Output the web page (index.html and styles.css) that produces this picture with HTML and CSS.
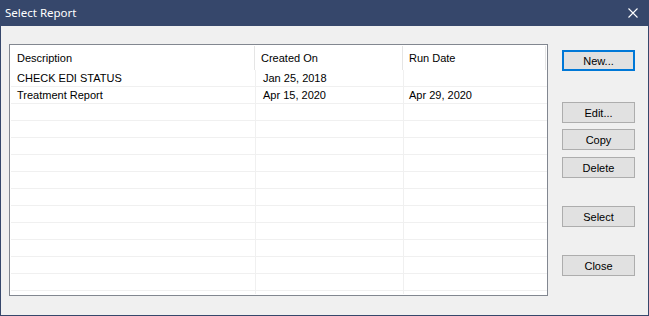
FILE: index.html
```html
<!DOCTYPE html>
<html lang="en">
<head>
  <meta charset="UTF-8" />
  <title>Select Report</title>
  <link rel="stylesheet" href="styles.css">
</head>
<body>
  <div class="window">
    <div class="titlebar">
      <span class="title">Select Report</span>
      <svg class="close-icon" width="10" height="10" viewBox="0 0 10 10">
        <path d="M0.5 0.5 L9.5 9.5 M9.5 0.5 L0.5 9.5" stroke="#fff" stroke-width="1.1" fill="none" />
      </svg>
    </div>
    <div class="content">
      <div class="list">
        <div class="list-head">
          <div class="head-cell c1">Description</div>
          <div class="head-cell c2">Created On</div>
          <div class="head-cell c3">Run Date</div>
        </div>
        <div class="row">
          <div class="cell c1">CHECK EDI STATUS</div>
          <div class="cell c2">Jan 25, 2018</div>
          <div class="cell c3"></div>
        </div>
        <div class="row">
          <div class="cell c1">Treatment Report</div>
          <div class="cell c2">Apr 15, 2020</div>
          <div class="cell c3">Apr 29, 2020</div>
        </div>
        <div class="row"><div class="cell c1"></div><div class="cell c2"></div><div class="cell c3"></div></div>
        <div class="row"><div class="cell c1"></div><div class="cell c2"></div><div class="cell c3"></div></div>
        <div class="row"><div class="cell c1"></div><div class="cell c2"></div><div class="cell c3"></div></div>
        <div class="row"><div class="cell c1"></div><div class="cell c2"></div><div class="cell c3"></div></div>
        <div class="row"><div class="cell c1"></div><div class="cell c2"></div><div class="cell c3"></div></div>
        <div class="row"><div class="cell c1"></div><div class="cell c2"></div><div class="cell c3"></div></div>
        <div class="row"><div class="cell c1"></div><div class="cell c2"></div><div class="cell c3"></div></div>
        <div class="row"><div class="cell c1"></div><div class="cell c2"></div><div class="cell c3"></div></div>
        <div class="row"><div class="cell c1"></div><div class="cell c2"></div><div class="cell c3"></div></div>
        <div class="row"><div class="cell c1"></div><div class="cell c2"></div><div class="cell c3"></div></div>
        <div class="row"><div class="cell c1"></div><div class="cell c2"></div><div class="cell c3"></div></div>
        <div class="row filler"><div class="cell c1"></div><div class="cell c2"></div><div class="cell c3"></div></div>
      </div>
      <div class="buttons">
        <button class="btn default">New...</button>
        <button class="btn gap-large">Edit...</button>
        <button class="btn gap-small">Copy</button>
        <button class="btn gap-small2">Delete</button>
        <button class="btn gap-mid">Select</button>
        <button class="btn gap-mid">Close</button>
      </div>
    </div>
  </div>
</body>
</html>
```

FILE: styles.css
```css
body {
  margin: 0;
  font-family: 'Liberation Sans', Arial, sans-serif;
  font-size: 11px;
  color: #000;
  background: #f0f0f0;
}
.window {
  width: 649px;
  height: 316px;
  box-sizing: border-box;
  border: 1px solid #36476b;
  border-top: none;
  background: #f0f0f0;
  display: flex;
  flex-direction: column;
}
.titlebar {
  height: 26px;
  flex-shrink: 0;
  background: #36476b;
  display: flex;
  align-items: center;
  justify-content: space-between;
  padding: 0 10px 0 4px;
}
.title {
  font-family: 'Noto Sans', sans-serif;
  font-size: 11.5px;
  color: #fff;
  margin-top: -1px;
}
.close-icon {
  display: block;
}
.content {
  display: flex;
  gap: 14px;
  padding: 18px 0 0 8px;
}
.list {
  width: 539px;
  height: 252px;
  box-sizing: border-box;
  border: 1px solid #828790;
  background: #fff;
  padding: 1px 0 1px 1px;
  display: flex;
  flex-direction: column;
}
.list-head {
  display: flex;
  height: 24px;
  flex-shrink: 0;
}
.head-cell {
  box-sizing: border-box;
  display: flex;
  align-items: center;
  padding-left: 6px;
  border-right: 1px solid #e5e5e5;
}
.head-cell.c1 { width: 244px; }
.head-cell.c2 { width: 148px; }
.head-cell.c3 { width: 143px; }
.row {
  display: flex;
  height: 17px;
  flex-shrink: 0;
  box-sizing: border-box;
  border-bottom: 1px solid #f0f0f0;
}
.row.filler {
  flex: 1;
  border-bottom: none;
}
.cell {
  box-sizing: border-box;
  line-height: 16px;
  padding-left: 6px;
  white-space: nowrap;
}
.cell.c1 { width: 245px; border-right: 1px solid #f0f0f0; }
.cell.c2 { width: 148px; border-right: 1px solid #f0f0f0; padding-left: 7px; }
.cell.c3 { width: 143px; padding-left: 5px; }
.buttons {
  display: flex;
  flex-direction: column;
  margin-top: 6px;
}
.btn {
  width: 73px;
  height: 21px;
  box-sizing: border-box;
  background: #e1e1e1;
  border: 1px solid #adadad;
  font-family: 'Liberation Sans', Arial, sans-serif;
  font-size: 11px;
  color: #000;
  padding: 0;
}
.btn.default {
  border: 2px solid #0078d7;
}
.gap-large { margin-top: 31px; }
.gap-small { margin-top: 6px; }
.gap-small2 { margin-top: 7px; }
.gap-mid { margin-top: 28px; }
```
